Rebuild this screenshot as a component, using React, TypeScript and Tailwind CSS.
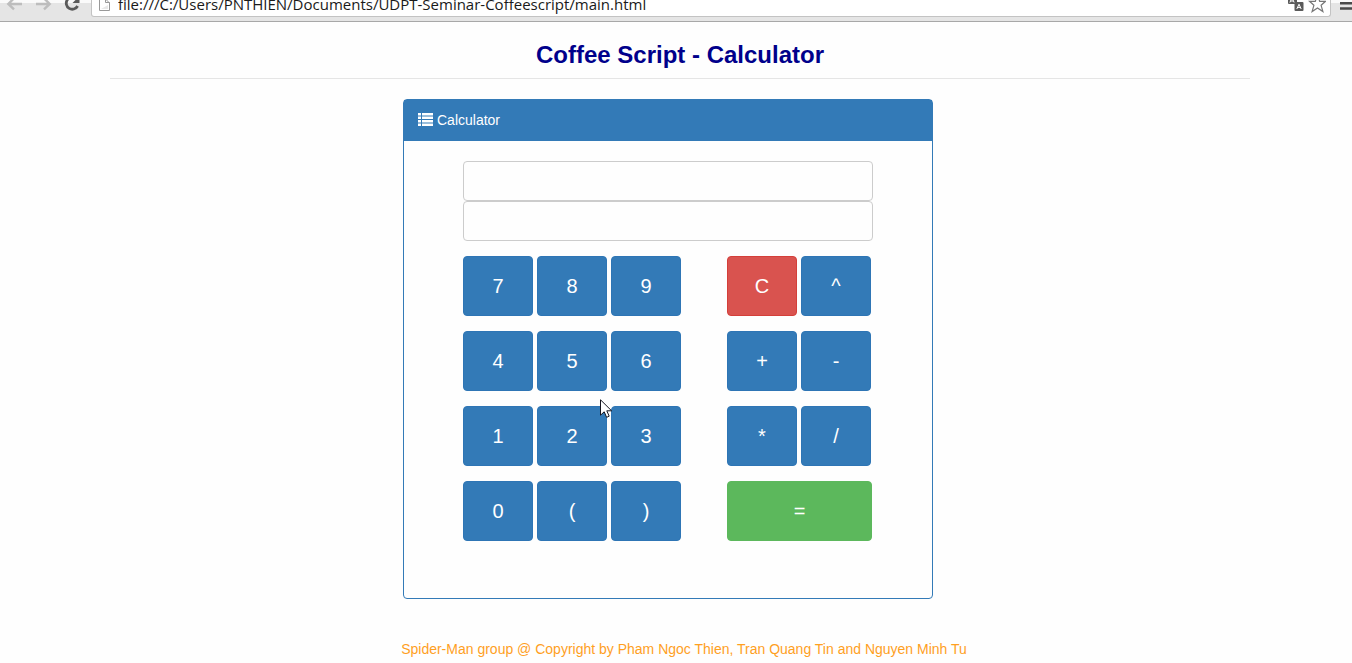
import { useState } from "react";

const keyBase =
  "h-[60px] rounded border text-xl text-white font-normal leading-none cursor-pointer";
const blueKey = "w-[70px] border-[#2e75b5] bg-[#337ab7]";
const redKey = "w-[70px] border-[#d43f3a] bg-[#d9534f]";
const greenKey = "w-[145px] border-[#5cb85c] bg-[#5cb85c]";

const rows: { digits: string[]; operators: string[] }[] = [
  { digits: ["7", "8", "9"], operators: ["C", "^"] },
  { digits: ["4", "5", "6"], operators: ["+", "-"] },
  { digits: ["1", "2", "3"], operators: ["*", "/"] },
  { digits: ["0", "(", ")"], operators: ["="] },
];

function Key({ label, onPress }: { label: string; onPress: (k: string) => void }) {
  const tone = label === "C" ? redKey : label === "=" ? greenKey : blueKey;
  return (
    <button type="button" className={`${keyBase} ${tone}`} onClick={() => onPress(label)}>
      {label}
    </button>
  );
}

function BrowserBar() {
  return (
    <header className="flex h-[22px] items-start overflow-hidden border-b border-[#a8a8a8] bg-[linear-gradient(#fafafa_3px,#e5e5e5_3px)]">
      <div className="flex w-[91px] shrink-0">
        <button type="button" aria-label="Back" className="ml-1.5">
          <svg width="18" height="12" viewBox="0 0 18 12" fill="none" stroke="#bdbdbd" strokeWidth="2.4">
            <path d="M16 4H2.5M8.5 -2.2L2.3 4L8 9.3" />
          </svg>
        </button>
        <button type="button" aria-label="Forward" className="ml-3">
          <svg width="18" height="12" viewBox="0 0 18 12" fill="none" stroke="#bdbdbd" strokeWidth="2.4">
            <path d="M0 4H13.5M7.5 -2.2L13.7 4L8 9.3" />
          </svg>
        </button>
        <button type="button" aria-label="Reload" className="ml-2.5">
          <svg width="18" height="12" viewBox="0 0 18 12" fill="none">
            <path d="M12 -1.5A6 6 0 1 0 13.6 6" stroke="#5a5a5a" strokeWidth="2.8" />
            <path d="M8.5 3H15.5V-4Z" fill="#5a5a5a" />
          </svg>
        </button>
      </div>
      <div className="flex h-[17px] min-w-0 flex-1 items-end overflow-hidden rounded-b-[3px] border-x border-b border-[#c3c3c3] bg-white pl-1.5 pr-1">
        <svg className="mb-1 mr-2 shrink-0" width="12" height="12" viewBox="0 0 12 12" fill="none" stroke="#999">
          <path d="M1.5 -2V10.5H11.5V2.5H7.5V-2M7.5 -1L11.5 3" />
          <path d="M3 9H10V5Z" fill="#e8e8e8" stroke="none" />
        </svg>
        <input
          aria-label="Address"
          readOnly
          value="file:///C:/Users/PNTHIEN/Documents/UDPT-Seminar-Coffeescript/main.html"
          className="h-6 min-w-0 flex-1 bg-transparent font-['Open_Sans',sans-serif] text-[15px] leading-6 text-[#1a1a1a] outline-none"
        />
        <svg className="mb-1 shrink-0" width="17" height="12" viewBox="0 0 17 12">
          <rect x="1" y="-6" width="9" height="10" rx="1" fill="#5a5a5a" />
          <path d="M2.8 2.5L5 -2L7.2 2.5M3.5 1H6.5" stroke="#fff" fill="none" />
          <rect x="7.5" y="2" width="9" height="9" rx="1" fill="#5a5a5a" />
          <path d="M9.8 9L12 4.2L14.2 9M10.5 7.4H13.5" stroke="#fff" fill="none" />
        </svg>
        <svg className="mb-0.5 ml-1 shrink-0" width="18" height="14" viewBox="0 0 18 14" fill="none" stroke="#777" strokeWidth="1.2">
          <path d="M9.5 -5L11.7 1.3H17.5L13.1 5.3L14.9 11.6L9.5 8L4.1 11.6L5.9 5.3L1.5 1.3H7.3Z" />
        </svg>
      </div>
      <button type="button" aria-label="Menu" className="ml-2 shrink-0">
        <svg width="13" height="12" viewBox="0 0 13 12" fill="#4a4a4a">
          <path d="M1 2H13V4.6H1ZM1 7.2H13V9.8H1Z" />
        </svg>
      </button>
    </header>
  );
}

export default function App() {
  const [expression, setExpression] = useState("");
  const [result, setResult] = useState("");

  const press = (key: string) => {
    if (key === "C") {
      setExpression("");
      setResult("");
    } else if (key === "=") {
      try {
        const value = Function(`return (${expression.replace(/\^/g, "**")})`)();
        setResult(String(value));
      } catch {
        setResult("Error");
      }
    } else {
      setExpression(expression + key);
    }
  };

  const field =
    "block h-10 w-full rounded border border-[#ccc] bg-[#fefefe] px-3 text-right text-lg text-[#555] outline-none";

  return (
    <div className="relative min-h-screen bg-[#fefefe] font-['Liberation_Sans',Arial,sans-serif] text-sm">
      <BrowserBar />
      <div className="pl-2">
        <div className="mx-auto max-w-[1140px]">
          <h1 className="border-b border-[#e5e5e5] pt-5 pb-2.5 text-center text-2xl leading-[26px] font-bold text-[#00008b]">
            Coffee Script - Calculator
          </h1>
          <main className="pt-5 pr-6">
            <section className="mx-auto max-w-[530px] rounded border border-[#337ab7] bg-[#fefefe]">
              <h2 className="flex h-[41px] items-center gap-1 bg-[#337ab7] pb-0.5 pl-3.5 text-white">
                <svg width="15" height="13" viewBox="0 0 15 13" fill="#fff">
                  <path d="M0 0H3V2.5H0ZM4 0H15V2.5H4ZM0 3.5H3V6H0ZM4 3.5H15V6H4ZM0 7H3V9.5H0ZM4 7H15V9.5H4ZM0 10.5H3V13H0ZM4 10.5H15V13H4Z" />
                </svg>
                Calculator
              </h2>
              <div className="px-[59px] pt-5 pb-[57px]">
                <input aria-label="Expression" className={field} value={expression} onChange={(e) => setExpression(e.target.value)} />
                <input aria-label="Result" className={field} value={result} readOnly />
                <div className="flex flex-col gap-[15px] pt-[15px]">
                  {rows.map((row) => (
                    <div key={row.digits[0]} className="flex gap-[46px]">
                      <div className="flex gap-1">
                        {row.digits.map((k) => (
                          <Key key={k} label={k} onPress={press} />
                        ))}
                      </div>
                      <div className="flex gap-1">
                        {row.operators.map((k) => (
                          <Key key={k} label={k} onPress={press} />
                        ))}
                      </div>
                    </div>
                  ))}
                </div>
              </div>
            </section>
          </main>
          <footer className="pt-10 pb-1 pl-2 text-center leading-5 text-[#ffa01e]">
            Spider-Man group @ Copyright by Pham Ngoc Thien, Tran Quang Tin and Nguyen Minh Tu
          </footer>
        </div>
      </div>
      <svg
        className="pointer-events-none absolute top-[399px] left-[600px]"
        width="13"
        height="20"
        viewBox="0 0 13 20"
        fill="#fff"
        stroke="#14141e"
      >
        <path d="M0.5 0.8V16.2L4.2 12.8L6.6 18.3L9.2 17.2L6.8 11.8H11.6Z" />
      </svg>
    </div>
  );
}
